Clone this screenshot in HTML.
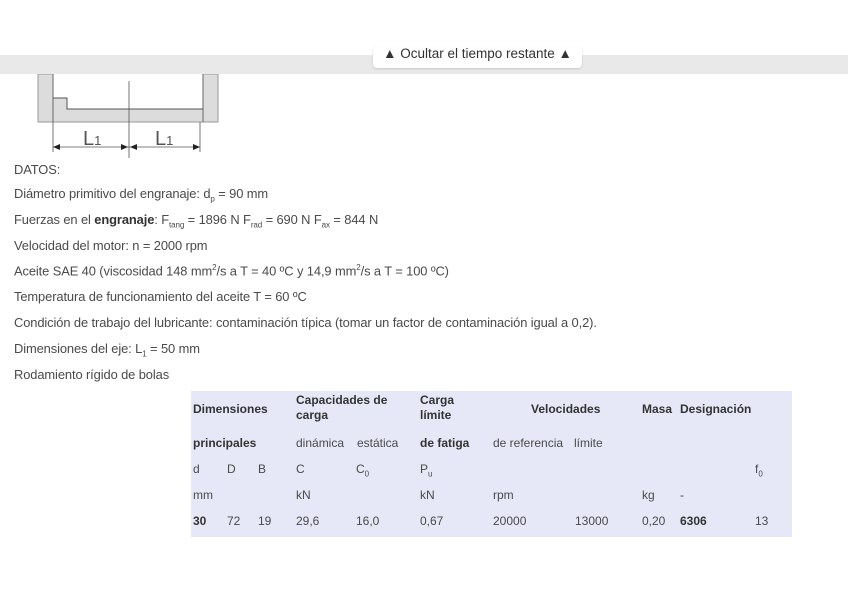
<!DOCTYPE html>
<html><head><meta charset="utf-8"><style>
body{margin:0;width:848px;height:599px;background:#fff;position:relative;overflow:hidden;font-family:"Liberation Sans",sans-serif;color:#4a4a4a}
.bar{position:absolute;left:0;top:55px;width:848px;height:19px;background:#e9e9e9}
.btn{position:absolute;left:373px;top:48px;width:209px;height:20px;background:#fff;border-radius:0 0 4px 4px;box-shadow:0 1px 2px rgba(0,0,0,.15);font-size:13.5px;color:#333;text-align:center;overflow:hidden}
.btn span{position:absolute;left:0;right:0;top:-4px;line-height:20px}
.t{position:absolute;left:14px;font-size:12.9px;white-space:nowrap;letter-spacing:-0.1px}
sub,sup{font-size:8px}
.tb{position:absolute;left:191px;top:391px;width:601px;height:146px;background:#e6e8f7;font-size:12px}
.tb div{position:absolute;white-space:nowrap}
b{color:#333}
</style></head><body>
<svg style="position:absolute;left:0;top:0" width="848" height="170">
<path d="M38 74V122H218V74H203V109H67V98H53V74Z" fill="#dcdcdc" stroke="#999" stroke-width="1"/>
<path d="M53 74V122M203 74V122" stroke="#666" stroke-width="1"/>
<path d="M53 98H67V109H203" fill="none" stroke="#555"/>
<path d="M129 81V158M53 122V152M200 122V152M53 147H200" stroke="#555" stroke-width="0.8"/>
<path d="M53 147l7-3v6zM128 147l-7-3v6zM130 147l7-3v6zM200 147l-7-3v6z" fill="#222"/>
<text x="83" y="145" font-size="20" font-family="Liberation Sans" fill="#555">L<tspan font-size="13">1</tspan></text>
<text x="155" y="145" font-size="20" font-family="Liberation Sans" fill="#555">L<tspan font-size="13">1</tspan></text>
</svg>
<div class="bar"></div>
<div class="btn"><span>▲ Ocultar el tiempo restante ▲</span></div>
<div class="t" style="top:162px">DATOS:</div>
<div class="t" style="top:186px">Diámetro primitivo del engranaje: d<sub>p</sub> = 90 mm</div>
<div class="t" style="top:212px">Fuerzas en el <b>engranaje</b>: F<sub>tang</sub> = 1896 N F<sub>rad</sub> = 690 N F<sub>ax</sub> = 844 N</div>
<div class="t" style="top:238px">Velocidad del motor: n = 2000 rpm</div>
<div class="t" style="top:263px">Aceite SAE 40 (viscosidad 148 mm<sup>2</sup>/s a T = 40 ºC y 14,9 mm<sup>2</sup>/s a T = 100 ºC)</div>
<div class="t" style="top:289px">Temperatura de funcionamiento del aceite T = 60 ºC</div>
<div class="t" style="top:315px">Condición de trabajo del lubricante: contaminación típica (tomar un factor de contaminación igual a 0,2).</div>
<div class="t" style="top:341px">Dimensiones del eje: L<sub>1</sub> = 50 mm</div>
<div class="t" style="top:367px">Rodamiento rígido de bolas</div>
<div class="tb">
<div style="left:2px;top:11px"><b>Dimensiones</b></div>
<div style="left:105px;top:2px;line-height:15px"><b>Capacidades de<br>carga</b></div>
<div style="left:229px;top:2px;line-height:15px"><b>Carga<br>límite</b></div>
<div style="left:340px;top:11px"><b>Velocidades</b></div>
<div style="left:451px;top:11px"><b>Masa</b></div>
<div style="left:489px;top:11px"><b>Designación</b></div>
<div style="left:2px;top:45px"><b>principales</b></div>
<div style="left:105px;top:45px">dinámica</div>
<div style="left:166px;top:45px">estática</div>
<div style="left:229px;top:45px"><b>de fatiga</b></div>
<div style="left:302px;top:45px">de referencia</div>
<div style="left:383px;top:45px">límite</div>
<div style="left:2px;top:71px">d</div><div style="left:36px;top:71px">D</div><div style="left:67px;top:71px">B</div>
<div style="left:105px;top:71px">C</div><div style="left:165px;top:71px">C<sub>0</sub></div><div style="left:229px;top:71px">P<sub>u</sub></div>
<div style="left:564px;top:71px">f<sub>0</sub></div>
<div style="left:2px;top:97px">mm</div><div style="left:105px;top:97px">kN</div><div style="left:229px;top:97px">kN</div>
<div style="left:302px;top:97px">rpm</div><div style="left:451px;top:97px">kg</div><div style="left:489px;top:97px">-</div>
<div style="left:2px;top:123px"><b>30</b></div><div style="left:36px;top:123px">72</div><div style="left:67px;top:123px">19</div>
<div style="left:105px;top:123px">29,6</div><div style="left:165px;top:123px">16,0</div><div style="left:229px;top:123px">0,67</div>
<div style="left:302px;top:123px">20000</div><div style="left:384px;top:123px">13000</div><div style="left:451px;top:123px">0,20</div>
<div style="left:489px;top:123px"><b>6306</b></div><div style="left:564px;top:123px">13</div>
</div>
</body></html>
